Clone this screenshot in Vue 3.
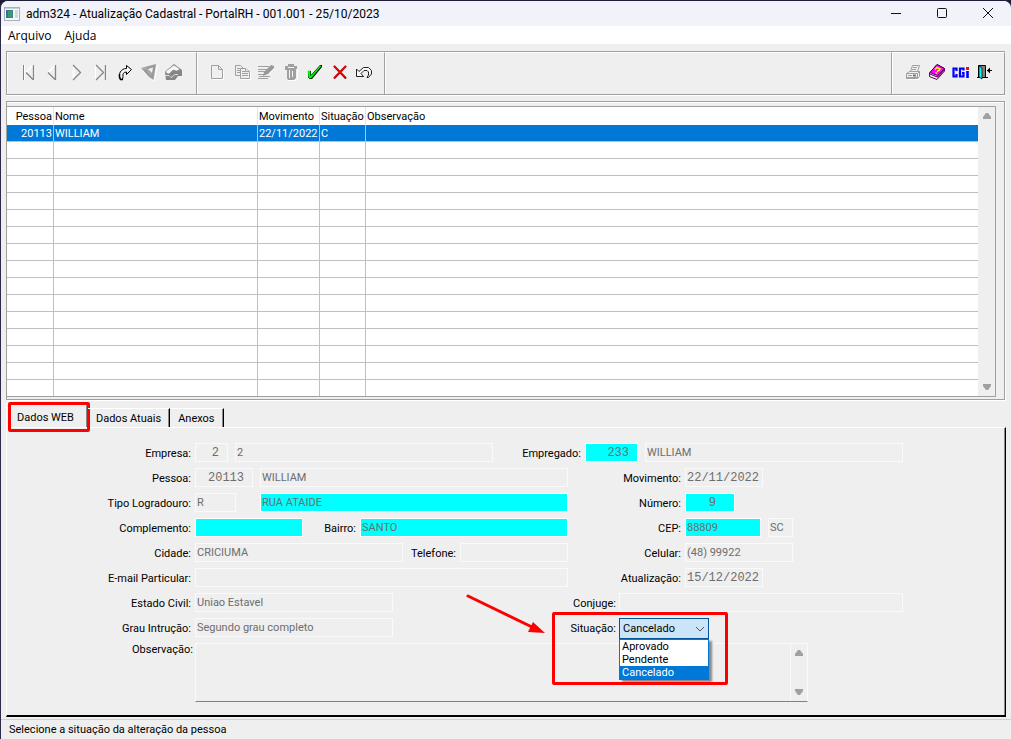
<script setup>
import { ref } from 'vue'

const emptyRows = Array.from({ length: 15 }, (_, i) => i)
const situations = ['Aprovado', 'Pendente', 'Cancelado']
const situation = ref('Cancelado')

const f = (id, value, w, opts = {}) => ({ id, value, w, ...opts })
const rows = [
  { left: { label: 'Empresa:', fields: [f('empresa', '2', 'w33', { num: true }), f('empresaNome', '2', 'w258')], cls: 'short' },
    right: { label: 'Empregado:', lab: 'l92', fields: [f('empregado', '233', 'w53', { num: true, changed: true }), f('empregadoNome', 'WILLIAM', 'w258')] } },
  { left: { label: 'Pessoa:', fields: [f('pessoa', '20113', 'w58', { num: true }), f('pessoaNome', 'WILLIAM', 'fill')] },
    right: { label: 'Movimento:', lab: 'l117', fields: [f('movimento', '22/11/2022', 'w78', { mono: true })] } },
  { left: { label: 'Tipo Logradouro:', fields: [f('tipo', 'R', 'w41'), f('rua', 'RUA ATAIDE', 'w308', { changed: true, end: true })] },
    right: { label: 'Número:', lab: 'l117', fields: [f('numero', '9', 'w50', { num: true, changed: true, inset: true })] } },
  { left: { label: 'Complemento:', fields: [f('complemento', '', 'w108', { changed: true })], label2: 'Bairro:', lab2: 'l50', fields2: [f('bairro', 'SANTO', 'fill', { changed: true })] },
    right: { label: 'CEP:', lab: 'l117', fields: [f('cep', '88809', 'w76', { changed: true }), f('uf', 'SC', 'w25')] } },
  { left: { label: 'Cidade:', fields: [f('cidade', 'CRICIUMA', 'w208')], label2: 'Telefone:', lab2: 'l50', fields2: [f('telefone', '', 'fill')] },
    right: { label: 'Celular:', lab: 'l117', fields: [f('celular', '(48) 99922', 'w108')] } },
  { left: { label: 'E-mail Particular:', fields: [f('email', '', 'fill')] },
    right: { label: 'Atualização:', lab: 'l117', fields: [f('atualizacao', '15/12/2022', 'w78', { mono: true })] } },
  { left: { label: 'Estado Civil:', fields: [f('civil', 'Uniao Estavel', 'w198')] },
    right: { label: 'Conjuge:', lab: 'l51', fields: [f('conjuge', '', 'w284')] } },
  { left: { label: 'Grau Intrução:', fields: [f('grau', 'Segundo grau completo', 'w198')] }, right: null },
]
const fieldClass = (x) => [x.w, { num: x.num, mono: x.mono, changed: x.changed, end: x.end, inset: x.inset }]
</script>

<template>
  <div class="window">
    <header class="titlebar">
      <svg class="app-icon" width="16" height="14" viewBox="0 0 16 14">
        <rect x="0.5" y="0.5" width="15" height="13" fill="#f6f8f8" stroke="#a9b0b6" />
        <rect x="1" y="1" width="14" height="1" fill="#c9ced3" />
        <rect x="2" y="3" width="7" height="8" fill="#2e8f86" />
        <rect x="2" y="3" width="3" height="8" fill="#3b6fa5" />
        <rect x="4" y="4" width="4" height="6" fill="#3f9a6a" />
        <rect x="11" y="3" width="3" height="8" fill="#d5dadd" />
      </svg>
      <h1>adm324 - Atualização Cadastral - PortalRH - 001.001 - 25/10/2023</h1>
      <div class="controls">
        <button aria-label="Minimizar"><svg width="12" height="12" viewBox="0 0 12 12"><path d="M1 5.500H11" stroke="#111" /></svg></button>
        <button aria-label="Maximizar"><svg width="12" height="12" viewBox="0 0 12 12"><rect x="1.500" y="0.500" width="9" height="9" rx="1" fill="none" stroke="#111" /></svg></button>
        <button aria-label="Fechar"><svg width="12" height="12" viewBox="0 0 12 12"><path d="M1 0L11 10M11 0L1 10" stroke="#111" /></svg></button>
      </div>
    </header>

    <nav class="menu">
      <button>Arquivo</button>
      <button>Ajuda</button>
    </nav>

    <div class="toolbar">
      <div class="group nav-group">
        <button aria-label="Primeiro"><svg viewBox="0 0 24 24"><path d="M8.500 5V20M18.500 5V20" stroke="#fff" /><path d="M7.500 5V20" stroke="#858585" /><path d="M17 5L10 12.500" stroke="#fff" stroke-width="1.500" /><path d="M17.500 5V20M10 12.500L17 19.500" stroke="#858585" stroke-width="1.300" /></svg></button>
        <button aria-label="Anterior"><svg viewBox="0 0 24 24"><path d="M15 5L8 12.500" stroke="#fff" stroke-width="1.500" /><path d="M15.500 5V20M8 12.500L15 19.500" stroke="#858585" stroke-width="1.300" /></svg></button>
        <button aria-label="Próximo"><svg viewBox="0 0 24 24"><path d="M9.500 5V20" stroke="#fff" stroke-width="1.500" /><path d="M9 5L16.500 12.500L9 20" stroke="#858585" stroke-width="1.300" /></svg></button>
        <button aria-label="Último"><svg viewBox="0 0 24 24"><path d="M7.500 5V20M18.500 5V20" stroke="#fff" /><path d="M8 5L15.500 12.500L8 20M17.500 5V20" stroke="#858585" stroke-width="1.300" /></svg></button>
        <button aria-label="Ir para"><svg viewBox="0 0 24 24"><path d="M13.500 5.500L18.500 9.500L13.500 14.500V12C10.500 12 9.500 14 10 16.500L9.500 19.500H7.500C4.500 14 8 8.500 13.500 8.500Z" fill="#f4f4f4" stroke="#000" /><path d="M6.500 14V17L7.500 19.500H10" stroke="#000" stroke-width="1.500" /></svg></button>
        <button aria-label="Filtrar"><svg viewBox="0 0 24 24"><path d="M6 11L17 21L20.500 5" stroke="#fff" /><path d="M4 8L19 4L16.500 20L12 17Z" fill="#9b9b9b" /><path d="M11 9L16 7.500L15 13Z" fill="#efefef" /><path d="M5 9L9 8L14 15" stroke="#b8b8b8" /></svg></button>
        <button aria-label="Localizar"><svg viewBox="0 0 24 24"><path d="M4 12L13 4L21 10V16L17 16L14 20H5Z" fill="#868686" /><path d="M5 11L13 5L19 9L16 11L12 10L8 14L5 13Z" fill="#f8f8f8" stroke="#909090" stroke-width=".700" /><path d="M4 15.500H8L10 17.500L14 14.500H17" stroke="#ddd" /></svg></button>
      </div>
      <div class="group edit-group">
        <button aria-label="Novo"><svg viewBox="0 0 24 24"><path d="M7.500 19.500H18.500V10" stroke="#fff" /><path d="M6.500 5.500H13.500L17.500 9.500V18.500H6.500ZM13.500 5.500V9.500H17.500" stroke="#a0a0a0" /></svg></button>
        <button aria-label="Copiar"><svg viewBox="0 0 24 24"><g fill="#efefef" stroke="#a0a0a0"><path d="M5.500 5.500H10.500L13.500 8.500V15.500H5.500Z" /><path d="M7 8.500H10M7 10.500H10M7 12.500H10" /><path d="M10.500 8.500H15.500L19.500 11.500V18.500H10.500Z" /><path d="M12 11.500H15M12 13.500H18M12 15.500H18M15.500 8.500V11.500H19" /></g><path d="M20.500 12V19.500H11" stroke="#fff" /></svg></button>
        <button aria-label="Editar"><svg viewBox="0 0 24 24"><path d="M4 6.500H15M4 9.500H13M4 11.500H11M4 14.500H10M5 16.500H16M4 18.500H14" stroke="#a0a0a0" /><path d="M17 5L20 6V8L14 14L9 16L10 12Z" fill="#999" /><path d="M20.500 8.500L15 14" stroke="#fff" /></svg></button>
        <button aria-label="Excluir"><svg viewBox="0 0 24 24"><path d="M9 20.500H16L18.500 18V11H20" stroke="#fff" /><path d="M6 6H9V4H15V6H18V9H17V18L15 20H9L8 18V10H6Z" fill="#a0a0a0" /><path d="M10.500 10V18M13.500 11V17M9 7.500H15" stroke="#f4f4f4" /></svg></button>
        <button aria-label="Confirmar"><svg viewBox="0 0 24 24"><path d="M5 11H8V15L17 5H19V7L9 19H6V18H5Z" fill="#000" /><path d="M5 11H7V16H8L17 6H18L8 18H6Z" fill="#0f0" stroke="#0f0" stroke-width=".700" /></svg></button>
        <button aria-label="Cancelar"><svg viewBox="0 0 24 24"><path d="M6 6L18 18.500M18 6L6 18.500" stroke="#7a0808" stroke-width="2" /><path d="M6 6L17 17M18 6L6 18" stroke="#f00" stroke-width="1.500" /></svg></button>
        <button aria-label="Desfazer"><svg viewBox="0 0 24 24"><path d="M4.500 9V16.500H11.500L9 13.500L12 10.500H15L16.500 12V15L15 17.500H16.500L19.500 14V10.500L16.500 7.500H11.500L7 11.500Z" fill="#f8f8f8" stroke="#222" /></svg></button>
      </div>
      <div class="group spacer"></div>
      <div class="group sys-group">
        <button aria-label="Imprimir"><svg viewBox="0 0 24 24"><path d="M7 19.500H18L19.500 17" stroke="#fff" /><g fill="#efefef" stroke="#a0a0a0"><path d="M9.500 11.500L11.500 5.500H18.500L16.500 11.500M12 7.500H16M11 9.500H15" /><path d="M5.500 13.500L8.500 11.500H18.500V16.500L16.500 18.500H5.500Z" /><path d="M5.500 13.500H16.500V18.500M16.500 13.500L18.500 11.500M7 15.500H11M6 17.500H16" /></g><path d="M12 15.500H15" stroke="#777" stroke-width="2" /></svg></button>
        <button aria-label="Ajuda"><svg viewBox="0 0 24 24"><path d="M4.500 13L12 4.500L19.500 8.500V11L12 19.500L4.500 16.500Z" fill="#fff" stroke="#500050" /><path d="M5 12.500L12 4.500L19.500 8.500L12.500 15.500Z" fill="#f0f" stroke="#500050" /><path d="M5 14L12.500 17L19.500 9.500" stroke="#800080" stroke-width="1.300" /><path d="M10 9.500L12 7.500L15 9L14 10.500L12 11.500M10.500 12.500L12 13.500" stroke="#ff0" stroke-width="1.500" /></svg></button>
        <button aria-label="CGI"><svg viewBox="0 0 24 24"><path d="M7.500 11V8.500H4.500V16.500H7.500V14M14.500 10.500V8.500H11V16.500H14.500V13H13" stroke="#00f" stroke-width="2.200" /><path d="M18.500 11V18" stroke="#00f" stroke-width="2.600" /><rect x="17" y="7" width="3" height="3" fill="#e01020" /></svg></button>
        <button aria-label="Sair"><svg viewBox="0 0 24 24"><path d="M5.500 5.500H12.500V17.500H5.500Z" fill="#808080" stroke="#000" /><path d="M6 6L9 8V19L6 17Z" fill="#0ff" stroke="#000" stroke-width=".700" /><path d="M4 17.500H6M9 17.500H15M14 10.500H19" stroke="#000" /><path d="M17 7.500V13.500L14 10.500Z" fill="#000" /></svg></button>
      </div>
    </div>

    <section class="grid-panel">
      <div class="grid-box">
        <table>
          <colgroup><col class="c1" /><col class="c2" /><col class="c3" /><col class="c4" /><col /></colgroup>
          <thead>
            <tr><th class="r">Pessoa</th><th>Nome</th><th>Movimento</th><th>Situação</th><th>Observação</th></tr>
          </thead>
          <tbody>
            <tr class="selected"><td class="r">20113</td><td>WILLIAM</td><td>22/11/2022</td><td>C</td><td></td></tr>
            <tr v-for="n in emptyRows" :key="n"><td></td><td></td><td></td><td></td><td></td></tr>
          </tbody>
        </table>
        <div class="scroll">
          <svg width="10" height="7" viewBox="0 0 10 7"><path d="M1 7V5L4 1H6L9 5V7Z" fill="#a0a0a0" /></svg>
          <svg width="10" height="7" viewBox="0 0 10 7"><path d="M1 0V2L4 6H6L9 2V0Z" fill="#a0a0a0" /></svg>
        </div>
      </div>
    </section>

    <div class="tabs">
      <button class="tab active">Dados WEB<span class="mark"></span></button>
      <button class="tab">Dados Atuais</button>
      <button class="tab">Anexos</button>
    </div>

    <main class="form">
      <div v-for="row in rows" :key="row.left.label" class="row">
        <div class="left" :class="row.left.cls">
          <label class="lab main-lab" :for="row.left.fields[0].id">{{ row.left.label }}</label>
          <input v-for="x in row.left.fields" :id="x.id" :key="x.id" :class="fieldClass(x)" :value="x.value" :aria-label="row.left.label" disabled />
          <template v-if="row.left.label2">
            <label class="lab" :class="row.left.lab2" :for="row.left.fields2[0].id">{{ row.left.label2 }}</label>
            <input v-for="x in row.left.fields2" :id="x.id" :key="x.id" :class="fieldClass(x)" :value="x.value" disabled />
          </template>
        </div>
        <div v-if="row.right" class="right">
          <label class="lab" :class="row.right.lab" :for="row.right.fields[0].id">{{ row.right.label }}</label>
          <input v-for="x in row.right.fields" :id="x.id" :key="x.id" :class="fieldClass(x)" :value="x.value" :aria-label="row.right.label" disabled />
        </div>
        <div v-else class="right">
          <label class="lab l51" for="situacao">Situação:</label>
          <div class="combo">
            <select id="situacao" v-model="situation">
              <option v-for="s in situations" :key="s">{{ s }}</option>
            </select>
            <svg class="chevron" width="10" height="6" viewBox="0 0 10 6"><path d="M1 1L5 5L9 1" fill="none" stroke="#555" /></svg>
            <ul class="options">
              <li v-for="s in situations" :key="s" :class="{ on: s === situation }" @click="situation = s">{{ s }}</li>
            </ul>
            <span class="mark"></span>
            <svg class="arrow" width="82" height="42" viewBox="0 0 82 42"><path d="M3 2L69 34" stroke="#f00" stroke-width="3" stroke-linecap="round" /><path d="M80 39L63 38L68 28Z" fill="#f00" /></svg>
          </div>
        </div>
      </div>
      <div class="obs-row">
        <label class="lab" for="obs">Observação:</label>
        <div class="obs">
          <textarea id="obs" disabled></textarea>
          <div class="scroll">
            <svg width="10" height="7" viewBox="0 0 10 7"><path d="M1 7V5L4 1H6L9 5V7Z" fill="#a0a0a0" /></svg>
            <svg width="10" height="7" viewBox="0 0 10 7"><path d="M1 0V2L4 6H6L9 2V0Z" fill="#a0a0a0" /></svg>
          </div>
        </div>
      </div>
    </main>

    <footer class="status">Selecione a situação da alteração da pessoa</footer>
  </div>
</template>

<style>
body { background: #1d1d3a; }
</style>

<style scoped>
* { box-sizing: border-box; }
.window {
  display: flex; flex-direction: column; min-height: 100vh;
  border-left: 1px solid #2b2b4b; border-top: 1px solid #1d1d3a;
  border-radius: 8px 8px 0 0; background: #efefef; color: #000;
  font: 11px/16px Roboto, "Liberation Sans", sans-serif;
}
button { border: 0; padding: 0; margin: 0; background: none; font: inherit; color: inherit; }
.titlebar {
  display: flex; align-items: center; height: 25px; padding-left: 3px;
  background: #f1f2fa; border-radius: 7px 7px 0 0;
}
h1 { flex: 1; margin: 0 0 0 6px; font: 12px/16px Roboto, "Open Sans", sans-serif; white-space: nowrap; }
.controls { display: flex; }
.controls button { display: flex; align-items: center; justify-content: center; width: 46px; height: 24px; }
.menu {
  display: flex; gap: 13px; height: 18px; padding-left: 7px; background: #fff;
  font: 12px/20px "Open Sans", "Noto Sans", sans-serif;
}
.toolbar { display: flex; margin: 7px 6px 6px 5px; border: 1px solid #a0a0a0; border-right: 0; box-shadow: 0 1px #fff; }
.group {
  display: flex; align-items: center; justify-content: space-between; height: 42px;
  border: 1px solid #fff; border-right: 1px solid #a0a0a0; border-bottom: 0;
}
.group button { width: 24px; height: 24px; }
.group svg { display: block; width: 24px; height: 24px; fill: none; }
.nav-group { width: 190px; padding: 0 11px 4px 8px; }
.edit-group { width: 188px; padding: 0 8px 4px 7px; }
.spacer { flex: 1; }
.sys-group { width: 113px; padding: 0 9px 4px 8px; }

.grid-panel { margin: 0 6px 0 5px; padding: 4px 8px 2px 0; border: 1px solid #a0a0a0; box-shadow: inset 0 1px #fff, 1px 1px #fff; }
.grid-box { display: flex; border: 1px solid #a0a0a0; border-left: 0; background: #fff; }
table { flex: 1; border-collapse: separate; border-spacing: 0; table-layout: fixed; width: 100%; }
.c1 { width: 47px; } .c2 { width: 204px; } .c3 { width: 62px; } .c4 { width: 46px; }
th { height: 18px; padding: 2px 1px 0; font-weight: normal; text-align: left; line-height: 16px; border-right: 1px solid #e4e4e4; white-space: nowrap; }
td { height: 17px; padding: 2px 1px 0; line-height: 14px; border-right: 1px solid #c0c0c0; border-bottom: 1px solid #c0c0c0; white-space: nowrap; }
th:last-child, td:last-child { border-right: 0; }
tr:last-child td { border-bottom: 0; height: 16px; }
.r { text-align: right; }
.selected td { background: #0078d7; color: #fff; }
.scroll { display: flex; flex-direction: column; justify-content: space-between; align-items: center; width: 17px; padding: 5px 0; background: #efefef; }

.tabs { display: flex; align-items: flex-end; height: 24px; margin: 3px 5px 0; }
.tab { position: relative; height: 19px; padding: 2px 8px 0; border-top: 1px solid #fff; border-right: 1px solid #000; box-shadow: inset -1px 0 #8a8a8a; }
.tab.active { height: 24px; padding: 5px 13px 0 10px; border-left: 1px solid #fff; }
.mark { position: absolute; border: 3px solid #f00; border-radius: 2px; pointer-events: none; }
.tab .mark { inset: -2px -3px -5px 1px; }

.form {
  display: flex; flex-direction: column; gap: 6px; margin: 0 5px; padding: 15px 0 13px;
  border: 1px solid #fff; border-right-color: #000; border-bottom: 2px solid #000; box-shadow: inset -1px 0 #8a8a8a;
}
.row { display: flex; }
.left { display: flex; width: 561px; }
.left.short { width: 486px; }
.right { display: flex; }
.lab { flex: none; padding: 2px 4px 0 0; line-height: 17px; text-align: right; white-space: nowrap; }
.main-lab { width: 188px; }
.l50 { width: 50px; }
.l51 { width: 51px; padding-right: 3px; }
.l92 { width: 92px; }
.l117 { width: 117px; }
input {
  flex: none; height: 19px; margin: 0 7px 0 0; padding: 0 1px 1px; border: 1px solid #fafafa; border-radius: 0;
  background: #efefef; color: #6d6d6d; font: 11px/16px Roboto, "Liberation Sans", sans-serif;
}
.left input:last-child { margin-right: 0; }
.fill { flex: 1; min-width: 0; width: 0; }
.changed { background: #0ff; border-color: #fff; }
.num, .mono { font: 12px/16px "Liberation Mono", monospace; padding-bottom: 0; }
.num { text-align: right; padding-right: 8px; }
.inset { padding-right: 18px; }
.end { margin-left: auto; }
.w25 { width: 25px; } .w33 { width: 33px; } .w41 { width: 41px; } .w50 { width: 50px; }
.w53 { width: 53px; } .w58 { width: 58px; } .w76 { width: 76px; } .w78 { width: 78px; }
.w108 { width: 108px; } .w198 { width: 198px; } .w208 { width: 208px; } .w258 { width: 258px; }
.w284 { width: 284px; } .w308 { width: 308px; }

.combo { position: relative; width: 90px; height: 19px; }
select {
  display: block; width: 100%; height: 21px; padding: 0 3px; appearance: none;
  border: 1px solid #005499; border-radius: 0; background: #cce4f7; color: #000; font: inherit;
}
.chevron { position: absolute; right: 4px; top: 8px; }
.options {
  position: absolute; z-index: 2; left: 0; top: 21px; width: 90px; margin: 0; padding: 0; list-style: none;
  border: 1px solid #0078d7; background: #fff; box-shadow: 3px 2px 2px #888; line-height: 13px;
}
.options li { padding-left: 2px; }
.options .on { background: #0078d7; color: #fff; }
.combo .mark { z-index: 3; left: -67px; top: -6px; width: 176px; height: 73px; }
.arrow { position: absolute; left: -154px; top: -24px; }

.obs-row { display: flex; }
.obs-row .lab { width: 188px; padding: 0 2px 0 0; line-height: 13px; }
.obs { display: flex; width: 613px; height: 59px; border: 1px solid #fafafa; border-bottom-color: #808080; }
textarea { flex: 1; border: 0; padding: 1px; resize: none; background: #efefef; font: inherit; }
.obs .scroll { border-left: 1px solid #fafafa; padding: 5px 0; }

.status { flex: 1; margin-top: 2px; padding: 2px 8px 0; border-top: 1px solid #d0d0d0; }
</style>
